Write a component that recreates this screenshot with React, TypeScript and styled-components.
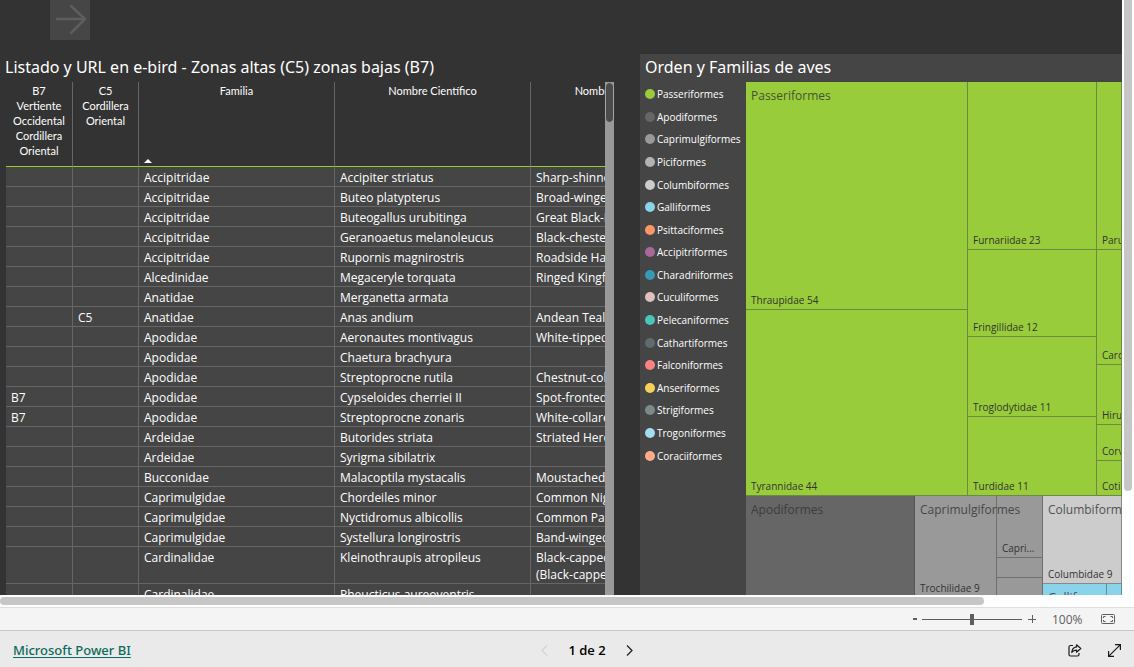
import React from "react";
import styled, { createGlobalStyle } from "styled-components";

const GlobalStyle = createGlobalStyle`
  * { box-sizing: border-box; }
  html, body { margin: 0; height: 100%; overflow: hidden; }
  body { font-family: "Open Sans", "Noto Sans", sans-serif; font-size: 12px; color: #fff; background: #fff; }
  button { font: inherit; color: inherit; border: 0; padding: 0; background: none; cursor: pointer; }
`;

const Page = styled.div`
  display: flex;
  flex-direction: column;
  height: 100vh;
`;

const Viewport = styled.div`
  flex: 1;
  min-height: 0;
  display: grid;
  grid-template-columns: minmax(0, 1fr) 12px;
  grid-template-rows: minmax(0, 1fr) 12px;
`;

const VerticalGutter = styled.div`
  padding: 0 2px;
`;

const HorizontalGutter = styled.div`
  padding: 2px 0;
`;

const Thumb = styled.div<{ $w: string; $h: string; $radius: string }>`
  width: ${(p) => p.$w};
  height: ${(p) => p.$h};
  border-radius: ${(p) => p.$radius};
  background: #c6c6c6;
`;

const Canvas = styled.main`
  background: #333;
  overflow: hidden;
  display: flex;
  flex-direction: column;
`;

const TopStrip = styled.div`
  height: 54px;
  flex: none;
  padding-left: 50px;
`;

const NextPageButton = styled.button`
  display: block;
  width: 40px;
  height: 40px;
  background: #464646;
`;

const Visuals = styled.div`
  flex: 1;
  min-height: 0;
  display: flex;
  gap: 26px;
`;

const Panel = styled.section<{ $fill?: boolean }>`
  display: flex;
  flex-direction: column;
  min-width: 0;
  min-height: 0;
  flex: ${(p) => (p.$fill ? "1" : "0 0 614px")};
  background: ${(p) => (p.$fill ? "#454545" : "transparent")};
`;

const Title = styled.h2`
  margin: 0;
  height: 28px;
  flex: none;
  padding-left: 5px;
  font-family: "Noto Sans", "Open Sans", sans-serif;
  font-size: 16px;
  line-height: 26px;
  font-weight: 400;
  white-space: nowrap;
`;

const TableArea = styled.div`
  flex: 1;
  min-height: 0;
  padding-left: 6px;
  display: flex;
`;

const TableClip = styled.div`
  flex: 1;
  min-width: 0;
  overflow: hidden;
`;

const TableScroll = styled.div`
  width: 9px;
  background: #999;
`;

const TableThumb = styled.div`
  height: 41px;
  border: 1px solid #a6a6a6;
  border-radius: 5px;
  background: #4b4b4b;
`;

const BirdTable = styled.table`
  width: 721px;
  table-layout: fixed;
  border-collapse: separate;
  border-spacing: 0;
`;

const HeadCell = styled.th`
  position: relative;
  height: 85px;
  padding: 1px 4px 0;
  vertical-align: top;
  font-family: Lato, "Open Sans", sans-serif;
  font-size: 11px;
  line-height: 15px;
  font-weight: 400;
  border-right: 1px solid #666;
  border-bottom: 1px solid #99cc33;
`;

const SortMark = styled.svg`
  position: absolute;
  left: 5px;
  bottom: 3px;
`;

const Cell = styled.td`
  height: 20px;
  padding: 2px 5px 0;
  vertical-align: top;
  background: #454545;
  line-height: 17px;
  border-right: 1px solid #666;
  border-bottom: 1px solid #666;
`;

const VisualBody = styled.div`
  display: flex;
  flex: 1;
  min-height: 0;
`;

const Legend = styled.ul`
  margin: 1px 0 0;
  padding: 0 0 0 5px;
  width: 106px;
  height: 384px;
  flex: none;
  list-style: none;
  display: flex;
  flex-direction: column;
  justify-content: space-around;
  font-size: 10px;
  line-height: 14px;
`;

const LegendItem = styled.li<{ $color: string }>`
  display: flex;
  align-items: center;
  gap: 2px;
  white-space: nowrap;
  &::before {
    content: "";
    width: 10px;
    height: 10px;
    border-radius: 50%;
    background: ${(p) => p.$color};
  }
`;

const TreeMap = styled.div`
  flex: 1;
  min-width: 0;
  overflow: hidden;
  display: flex;
  flex-direction: column;
  color: #333;
  font-size: 10px;
`;

const Band = styled.div<{ $h: number }>`
  flex: none;
  height: ${(p) => p.$h}px;
  display: flex;
`;

const Group = styled.div<{ $color: string; $w?: number; $h?: number }>`
  position: relative;
  display: flex;
  min-width: 0;
  flex: ${(p) => (p.$w ? `0 0 ${p.$w}px` : p.$h ? `0 0 ${p.$h}px` : "1")};
  background: ${(p) => p.$color};
`;

const GroupName = styled.span`
  position: absolute;
  top: 5px;
  left: 5px;
  font-size: 12px;
  line-height: 18px;
  opacity: 0.8;
  white-space: nowrap;
`;

const Column = styled.div<{ $w?: number }>`
  display: flex;
  flex-direction: column;
  min-width: 0;
  flex: ${(p) => (p.$w ? `0 0 ${p.$w}px` : "1")};
`;

const Tile = styled.div<{ $h?: number }>`
  flex: ${(p) => (p.$h ? `0 0 ${p.$h}px` : "1")};
  display: flex;
  align-items: flex-end;
  padding: 0 0 1px 5px;
  line-height: 15px;
  white-space: nowrap;
  overflow: hidden;
  border-right: 1px solid rgba(70, 70, 70, 0.5);
  border-bottom: 1px solid rgba(70, 70, 70, 0.5);
`;

const ZoomBar = styled.div`
  height: 24px;
  flex: none;
  display: flex;
  align-items: center;
  justify-content: flex-end;
  padding-right: 18px;
  background: #f4f4f4;
  border-top: 1px solid #dedede;
  border-bottom: 1px solid #c8c8c8;
  color: #605e5c;
`;

const StepButton = styled.button`
  width: 20px;
  height: 20px;
  display: grid;
  place-items: center;
`;

const ZoomSlider = styled.input`
  appearance: none;
  width: 100px;
  height: 12px;
  margin: 0;
  background: linear-gradient(#605e5c, #605e5c) center / 100% 1px no-repeat;
  &::-webkit-slider-thumb {
    appearance: none;
    width: 4px;
    height: 11px;
    background: #605e5c;
  }
`;

const ZoomValue = styled.span`
  width: 48px;
  padding-left: 10px;
  font-size: 12px;
`;

const FitButton = styled.button`
  width: 15px;
  height: 20px;
  margin-left: 11px;
  display: grid;
  place-items: center;
`;

const Footer = styled.footer`
  height: 36px;
  flex: none;
  display: flex;
  align-items: center;
  padding: 2px 13px 0;
  background: #eaeaea;
  color: #252423;
`;

const Brand = styled.div`
  flex: 1 1 40px;
  font-size: 13px;
`;

const BrandLink = styled.a`
  color: #0b6a5c;
  font-family: "Noto Sans", "Open Sans", sans-serif;
  font-weight: 500;
  text-underline-offset: 2px;
`;

const Pager = styled.nav`
  display: flex;
  align-items: center;
  gap: 18px;
  font-size: 13px;
  font-weight: 600;
  color: #000;
`;

const PagerButton = styled.button`
  width: 12px;
  height: 20px;
  display: grid;
  place-items: center;
  color: #252423;
  &:disabled { color: #c4c2c0; }
`;

const Actions = styled.div`
  flex: 1 1 0;
  display: flex;
  justify-content: flex-end;
  gap: 25px;
`;

const ActionButton = styled.button`
  width: 14px;
  height: 16px;
  display: grid;
  place-items: center;
`;

const headings = ["B7 Vertiente Occidental Cordillera Oriental", "C5 Cordillera Oriental", "Familia", "Nombre Científico", "Nombre Común Inglés"];
const widths = [67, 66, 196, 196, 196];

const birds: string[][] = [
  ["", "", "Accipitridae", "Accipiter striatus", "Sharp-shinned Hawk"],
  ["", "", "Accipitridae", "Buteo platypterus", "Broad-winged Hawk"],
  ["", "", "Accipitridae", "Buteogallus urubitinga", "Great Black-Hawk"],
  ["", "", "Accipitridae", "Geranoaetus melanoleucus", "Black-chested Buzzard-Eagle"],
  ["", "", "Accipitridae", "Rupornis magnirostris", "Roadside Hawk"],
  ["", "", "Alcedinidae", "Megaceryle torquata", "Ringed Kingfisher"],
  ["", "", "Anatidae", "Merganetta armata", ""],
  ["", "C5", "Anatidae", "Anas andium", "Andean Teal"],
  ["", "", "Apodidae", "Aeronautes montivagus", "White-tipped Swift"],
  ["", "", "Apodidae", "Chaetura brachyura", ""],
  ["", "", "Apodidae", "Streptoprocne rutila", "Chestnut-collared Swift"],
  ["B7", "", "Apodidae", "Cypseloides cherriei II", "Spot-fronted Swift"],
  ["B7", "", "Apodidae", "Streptoprocne zonaris", "White-collared Swift"],
  ["", "", "Ardeidae", "Butorides striata", "Striated Heron"],
  ["", "", "Ardeidae", "Syrigma sibilatrix", ""],
  ["", "", "Bucconidae", "Malacoptila mystacalis", "Moustached Puffbird"],
  ["", "", "Caprimulgidae", "Chordeiles minor", "Common Nighthawk"],
  ["", "", "Caprimulgidae", "Nyctidromus albicollis", "Common Pauraque"],
  ["", "", "Caprimulgidae", "Systellura longirostris", "Band-winged Nightjar"],
  ["", "", "Cardinalidae", "Kleinothraupis atropileus", "Black-capped Hemispingus (Black-capped)"],
  ["", "", "Cardinalidae", "Pheucticus aureoventris", ""],
];

const orders: [string, string][] = [
  ["Passeriformes", "#99cc3a"],
  ["Apodiformes", "#666666"],
  ["Caprimulgiformes", "#999999"],
  ["Piciformes", "#b3b3b3"],
  ["Columbiformes", "#cccccc"],
  ["Galliformes", "#8ad4eb"],
  ["Psittaciformes", "#fe9666"],
  ["Accipitriformes", "#a66999"],
  ["Charadriiformes", "#3599b8"],
  ["Cuculiformes", "#dfbfbf"],
  ["Pelecaniformes", "#4ac5bb"],
  ["Cathartiformes", "#5f6b6d"],
  ["Falconiformes", "#fb8281"],
  ["Anseriformes", "#f4d25a"],
  ["Strigiformes", "#7f898a"],
  ["Trogoniformes", "#a4ddee"],
  ["Coraciiformes", "#fdab89"],
];

export default function App() {
  return (
    <>
      <GlobalStyle />
      <Page>
        <Viewport>
          <Canvas>
            <TopStrip>
              <NextPageButton aria-label="Página siguiente del informe">
                <svg width="40" height="40" viewBox="0 0 40 40" fill="none" stroke="#5f5e5d" strokeWidth="2.500">
                  <path d="M6 19H35M20.500 5.500L35 19L20.500 33.500" />
                </svg>
              </NextPageButton>
            </TopStrip>
            <Visuals>
              <Panel>
                <Title>Listado y URL en e-bird - Zonas altas (C5) zonas bajas (B7)</Title>
                <TableArea>
                  <TableClip>
                    <BirdTable>
                      <colgroup>
                        {widths.map((w, i) => (
                          <col key={i} width={w} />
                        ))}
                      </colgroup>
                      <thead>
                        <tr>
                          {headings.map((h) => (
                            <HeadCell key={h} scope="col">
                              {h}
                              {h === "Familia" && (
                                <SortMark width="8" height="4" viewBox="0 0 8 4">
                                  <path d="M0 4L4 0L8 4Z" fill="#fff" />
                                </SortMark>
                              )}
                            </HeadCell>
                          ))}
                        </tr>
                      </thead>
                      <tbody>
                        {birds.map((row, i) => (
                          <tr key={i}>
                            {row.map((c, j) => (
                              <Cell key={j}>{c}</Cell>
                            ))}
                          </tr>
                        ))}
                      </tbody>
                    </BirdTable>
                  </TableClip>
                  <TableScroll>
                    <TableThumb />
                  </TableScroll>
                </TableArea>
              </Panel>
              <Panel $fill>
                <Title>Orden y Familias de aves</Title>
                <VisualBody>
                  <Legend>
                    {orders.map(([name, color]) => (
                      <LegendItem key={name} $color={color}>
                        {name}
                      </LegendItem>
                    ))}
                  </Legend>
                  <TreeMap>
                    <Band $h={414}>
                      <Group $color="#99cc3a">
                        <Column $w={222}>
                          <Tile $h={228}>Thraupidae 54</Tile>
                          <Tile>Tyrannidae 44</Tile>
                        </Column>
                        <Column $w={129}>
                          <Tile $h={168}>Furnariidae 23</Tile>
                          <Tile $h={87}>Fringillidae 12</Tile>
                          <Tile $h={80}>Troglodytidae 11</Tile>
                          <Tile>Turdidae 11</Tile>
                        </Column>
                        <Column>
                          <Tile $h={168}>Parulidae 9</Tile>
                          <Tile $h={115}>Cardinalidae 8</Tile>
                          <Tile $h={60}>Hirundinidae 7</Tile>
                          <Tile $h={36}>Corvidae 4</Tile>
                          <Tile>Cotingidae 4</Tile>
                        </Column>
                        <GroupName>Passeriformes</GroupName>
                      </Group>
                    </Band>
                    <Band $h={200}>
                      <Group $color="#666666" $w={169}>
                        <Column>
                          <Tile />
                        </Column>
                        <GroupName>Apodiformes</GroupName>
                      </Group>
                      <Group $color="#999999" $w={128}>
                        <Column $w={82}>
                          <Tile $h={102}>Trochilidae 9</Tile>
                          <Tile />
                        </Column>
                        <Column>
                          <Tile $h={62}>Capri...</Tile>
                          <Tile $h={20} />
                          <Tile />
                        </Column>
                        <GroupName>Caprimulgiformes</GroupName>
                      </Group>
                      <Column>
                        <Group $color="#cccccc" $h={88}>
                          <Column>
                            <Tile>Columbidae 9</Tile>
                          </Column>
                          <GroupName>Columbiformes</GroupName>
                        </Group>
                        <Group $color="#8ad4eb">
                          <Column $w={64}>
                            <Tile />
                          </Column>
                          <Column>
                            <Tile />
                          </Column>
                          <GroupName>Gallif...</GroupName>
                        </Group>
                      </Column>
                    </Band>
                  </TreeMap>
                </VisualBody>
              </Panel>
            </Visuals>
          </Canvas>
          <VerticalGutter>
            <Thumb $w="8px" $h="calc(100% - 104px)" $radius="0 0 4px 4px" />
          </VerticalGutter>
          <HorizontalGutter>
            <Thumb $w="calc(100% - 138px)" $h="8px" $radius="4px" />
          </HorizontalGutter>
        </Viewport>
        <ZoomBar>
          <StepButton aria-label="Alejar">
            <svg width="12" height="2"><path d="M7 1H11" stroke="#605e5c" strokeWidth="2" /></svg>
          </StepButton>
          <ZoomSlider type="range" min="0" max="100" defaultValue="50" aria-label="Zoom" />
          <StepButton aria-label="Acercar">
            <svg width="8" height="8"><path d="M0 4.500H8M4.500 0V8" stroke="#605e5c" /></svg>
          </StepButton>
          <ZoomValue>100%</ZoomValue>
          <FitButton aria-label="Ajustar a la página">
            <svg width="15" height="11" viewBox="0 0 15 11" fill="none" stroke="#605e5c">
              <rect x="0.500" y="0.500" width="13" height="9" rx="1" />
              <path d="M2.500 4V2.500H4.500M9.500 2.500H11.500V4M2.500 6V7.500H4.500M9.500 7.500H11.500V6" />
            </svg>
          </FitButton>
        </ZoomBar>
        <Footer>
          <Brand>
            <BrandLink href="#powerbi">Microsoft Power BI</BrandLink>
          </Brand>
          <Pager aria-label="Páginas">
            <PagerButton disabled aria-label="Página anterior">
              <svg width="7" height="11" fill="none" stroke="currentColor"><path d="M6 0.500L1 5.500L6 10.500" /></svg>
            </PagerButton>
            <span>1 de 2</span>
            <PagerButton aria-label="Página siguiente">
              <svg width="7" height="11" fill="none" stroke="currentColor" strokeWidth="1.300"><path d="M1 0.500L6 5.500L1 10.500" /></svg>
            </PagerButton>
          </Pager>
          <Actions>
            <ActionButton aria-label="Compartir">
              <svg width="14" height="13" viewBox="0 0 14 13" fill="none" stroke="#1b1a19" strokeWidth="1.200" strokeLinejoin="round">
                <path d="M5 1.500H2.500Q1 1.500 1 3V10.500Q1 12 2.500 12H9.500Q11 12 11 10.500V9" />
                <path d="M8.500 0.800L12.800 4.500L8.500 8.200V6.200Q5.500 6 3.800 8.500Q4.200 3.500 8.500 2.900Z" />
              </svg>
            </ActionButton>
            <ActionButton aria-label="Pantalla completa">
              <svg width="13" height="13" viewBox="0 0 13 13" fill="none" stroke="#1b1a19" strokeWidth="1.200">
                <path d="M7 0.600H12.400V6M12.400 0.600L0.600 12.400M0.600 7V12.400H6" />
              </svg>
            </ActionButton>
          </Actions>
        </Footer>
      </Page>
    </>
  );
}
